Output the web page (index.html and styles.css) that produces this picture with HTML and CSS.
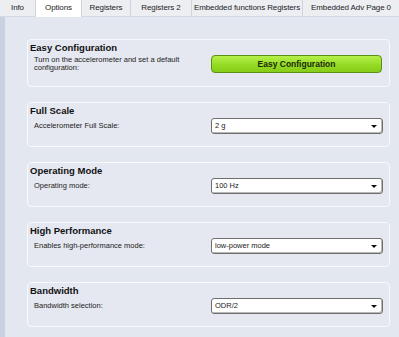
FILE: index.html
```html
<!DOCTYPE html>
<html lang="en">
<head>
  <meta charset="UTF-8" />
  <title>Options</title>
  <link rel="stylesheet" href="styles.css">
</head>
<body>
  <div class="tabs">
    <div class="tab tab-info">Info</div>
    <div class="tab tab-options active">Options</div>
    <div class="tab tab-regs">Registers</div>
    <div class="tab tab-regs2">Registers 2</div>
    <div class="tab tab-emb">Embedded functions Registers</div>
    <div class="tab tab-adv">Embedded Adv Page 0</div>
  </div>

  <div class="panel">
    <div class="card card-first">
      <div class="card-title">Easy Configuration</div>
      <div class="row">
        <div class="label">Turn on the accelerometer and set a default configuration:</div>
        <div class="control">
          <button class="green-btn">Easy Configuration</button>
        </div>
      </div>
    </div>

    <div class="card">
      <div class="card-title">Full Scale</div>
      <div class="row">
        <div class="label">Accelerometer Full Scale:</div>
        <div class="control">
          <div class="select">2 g<span class="arrow"></span></div>
        </div>
      </div>
    </div>

    <div class="card">
      <div class="card-title">Operating Mode</div>
      <div class="row">
        <div class="label">Operating mode:</div>
        <div class="control">
          <div class="select">100 Hz<span class="arrow"></span></div>
        </div>
      </div>
    </div>

    <div class="card">
      <div class="card-title">High Performance</div>
      <div class="row">
        <div class="label">Enables high-performance mode:</div>
        <div class="control">
          <div class="select">low-power mode<span class="arrow"></span></div>
        </div>
      </div>
    </div>

    <div class="card">
      <div class="card-title">Bandwidth</div>
      <div class="row">
        <div class="label">Bandwidth selection:</div>
        <div class="control">
          <div class="select">ODR/2<span class="arrow"></span></div>
        </div>
      </div>
    </div>
  </div>
</body>
</html>
```

FILE: styles.css
```css
* {
  margin: 0;
  padding: 0;
  box-sizing: border-box;
}

html, body {
  width: 399px;
  height: 337px;
  overflow: hidden;
  background: #e3e7f0;
  font-family: 'Liberation Sans', Arial, sans-serif;
  color: #1a1a1a;
}

.tabs {
  display: flex;
  height: 17px;
  background: #eef0f4;
  border-bottom: 1px solid #d4d8e2;
}

.tab {
  font-size: 8px;
  line-height: 16px;
  text-align: center;
  color: #222;
  border-right: 1px solid #cfd3dc;
  background: #eceef2;
  white-space: nowrap;
  letter-spacing: -0.1px;
}

.tab.active {
  background: #fff;
  height: 17px;
}

.tab-info { width: 36px; }
.tab-options { width: 46px; }
.tab-regs { width: 49px; }
.tab-regs2 { width: 61px; }
.tab-emb { width: 111px; }
.tab-adv { flex: 1; border-right: none; }

.panel {
  height: 320px;
  border-left: 5px solid #c9d0e0;
  padding: 22px 9px 0 22px;
  display: flex;
  flex-direction: column;
  gap: 15px;
}

.card {
  height: 45px;
  border: 1px solid #f8f9fc;
  border-radius: 4px;
  background: #e5e8f1;
  padding: 2px 6px 0 2px;
}

.card-first {
  height: 48px;
}

.card-title {
  font-size: 9.5px;
  font-weight: bold;
  line-height: 12px;
  color: #111;
}

.row {
  display: flex;
  align-items: center;
  min-height: 17px;
}

.card-first .row {
  margin-top: 1px;
}

.label {
  flex: 1;
  padding-left: 4px;
  padding-right: 20px;
  font-size: 7.5px;
  line-height: 8px;
  color: #222;
}

.control {
  width: 172px;
}

.green-btn {
  display: block;
  width: 171px;
  height: 18px;
  border: 1px solid #5b8f17;
  border-radius: 4px;
  background: linear-gradient(#b4f04a, #93da22 60%, #86cc18);
  font-family: 'Liberation Sans', Arial, sans-serif;
  font-size: 8.5px;
  font-weight: bold;
  color: #1c2a08;
}

.select {
  position: relative;
  height: 16px;
  background: #fff;
  border: 1px solid #6f6f6f;
  border-radius: 3px;
  box-shadow: inset -1px -1px 0 #b8b8b8;
  font-size: 7.5px;
  line-height: 14px;
  padding-left: 3px;
  color: #222;
}

.arrow {
  position: absolute;
  right: 5px;
  top: 6px;
  width: 0;
  height: 0;
  border-left: 3px solid transparent;
  border-right: 3px solid transparent;
  border-top: 3px solid #111;
}
```
